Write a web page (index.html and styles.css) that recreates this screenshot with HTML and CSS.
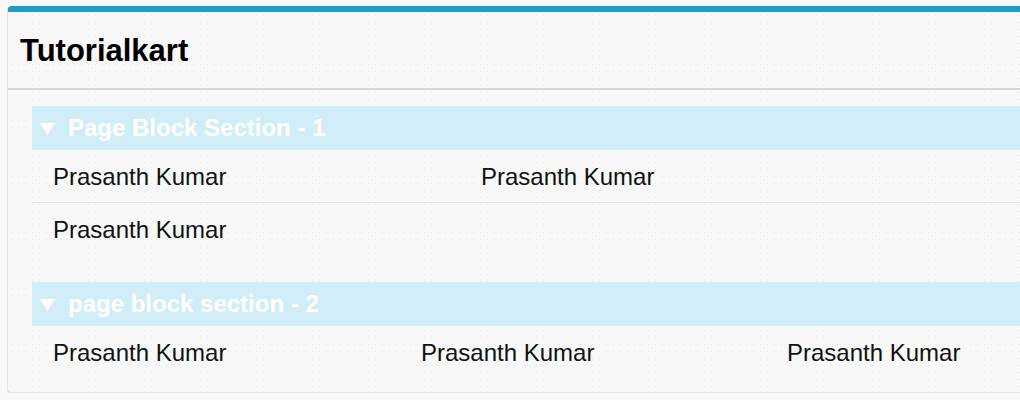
FILE: index.html
```html
<!DOCTYPE html>
<html>
<head>
<meta charset="utf-8">
<title>Tutorialkart</title>
<link rel="stylesheet" href="styles.css">
</head>
<body>
<div class="card">
  <div class="card-header">
    <h2 class="title">Tutorialkart</h2>
  </div>
  <div class="card-body">
    <div class="section">
      <div class="section-head">
        <svg class="twisty" width="15" height="12" viewBox="0 0 15 12"><polygon points="0,0 15,0 7.5,12" fill="#ffffff"/></svg>
        <span>Page Block Section - 1</span>
      </div>
      <div class="row cols-2 divided">
        <div class="cell">Prasanth Kumar</div>
        <div class="cell">Prasanth Kumar</div>
      </div>
      <div class="row cols-2">
        <div class="cell">Prasanth Kumar</div>
        <div class="cell"></div>
      </div>
    </div>
    <div class="section">
      <div class="section-head">
        <svg class="twisty" width="15" height="12" viewBox="0 0 15 12"><polygon points="0,0 15,0 7.5,12" fill="#ffffff"/></svg>
        <span>page block section - 2</span>
      </div>
      <div class="row cols-3">
        <div class="cell">Prasanth Kumar</div>
        <div class="cell">Prasanth Kumar</div>
        <div class="cell">Prasanth Kumar</div>
      </div>
    </div>
  </div>
</div>
</body>
</html>
```
FILE: styles.css
```css
html, body {
  margin: 0;
  padding: 0;
}
body {
  background: #f8f8f8;
  font-family: "Liberation Sans", Arial, sans-serif;
  color: #111;
  padding: 6px 0 0 7px;
}
.card {
  box-sizing: border-box;
  width: 1013px;
  background-color: #f8f8f8;
  background-image: radial-gradient(circle, #e9e9e9 0.7px, transparent 1px);
  background-size: 7px 7px;
  border: 1px solid #e2e2e2;
  border-right: 0;
  border-top: 6px solid #1f9bc6;
  border-radius: 5px 0 0 4px;
  box-shadow: 0 1px 1px rgba(0,0,0,0.06);
}
.card-header {
  height: 76px;
  display: flex;
  align-items: center;
  padding: 0 12px;
  border-bottom: 2px solid #d9d6d0;
}
.title {
  margin: 0;
  font-size: 31px;
  font-weight: bold;
  color: #000;
  padding-top: 1px;
}
.card-body {
  padding: 16px 0 14px 24px;
}
.section + .section {
  margin-top: 27px;
}
.section-head {
  height: 44px;
  background: #d0edf8;
  display: flex;
  align-items: center;
  padding-left: 8px;
  color: #fff;
  font-weight: bold;
  font-size: 24px;
}
.twisty {
  margin-right: 13px;
  margin-top: 1px;
}
.row {
  display: grid;
  height: 52px;
  align-items: center;
  font-size: 24px;
}
.row.divided {
  border-bottom: 1px solid #e6e6e6;
}
.cols-2 {
  grid-template-columns: 428px 1fr;
}
.cols-3 {
  grid-template-columns: 368px 366px 1fr;
}
.cell {
  padding-left: 21px;
  padding-top: 1px;
}
```
